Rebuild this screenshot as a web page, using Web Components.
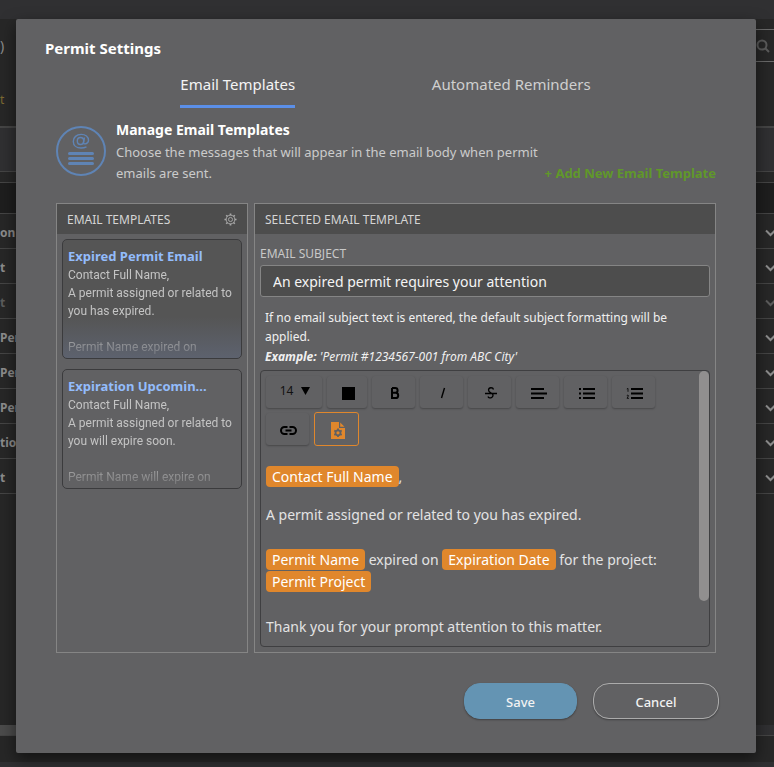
<!DOCTYPE html>
<html lang="en">
<head>
<meta charset="utf-8">
<title>Permit Settings</title>
<style>
html,body{height:100%;margin:0}
body{background:#272727;overflow:hidden;color:#f2f2f2;font-family:"Noto Sans","Open Sans",sans-serif;font-size:14px}
</style>
</head>
<body>
<permit-app></permit-app>
<script>
function define(name, html, setup) {
  const template = document.createElement('template');
  template.innerHTML = '<style>*{box-sizing:border-box}button,input{font:inherit;color:inherit}</style>' + html;
  customElements.define(name, class extends HTMLElement {
    constructor() {
      super();
      this.attachShadow({ mode: 'open' }).append(template.content.cloneNode(true));
    }
    connectedCallback() { if (setup) setup(this, this.shadowRoot); }
  });
}

define('permit-row', `
<style>
:host{display:flex;align-items:center;justify-content:space-between;height:35px;padding-top:3px;border-top:1px solid #454545;color:#8c8c8c;font-weight:700;font-size:12px;line-height:18px;overflow:hidden;box-sizing:border-box}
:host([muted]){color:#5c5c5c}
svg{display:block;margin-right:-2px}
</style>
<span><slot></slot></span>
<svg width="11" height="8" viewBox="0 0 11 8" fill="none" stroke="currentColor" stroke-width="2"><path d="M1 1.5 5.5 6 10 1.5"/></svg>`);

define('permit-list', `
<style>
:host{display:flex;flex-direction:column;height:100%;background:#272727}
.top{height:19px;background:#303032}
.search{display:flex;justify-content:space-between;align-items:flex-start;height:64px;padding-top:10px;font-size:14px;color:#8c8c8c}
.search span{line-height:33px}
.box{display:flex;align-items:center;justify-content:flex-end;width:60px;height:33px;padding-right:4px;border:1px solid #6a6a6a;border-right:0;color:#5c5c5c}
.tab{height:45px;line-height:34px;font-size:12px;color:#7d6a31;border-bottom:2px solid #454545}
.band{height:44px;background:#303032;border-bottom:1px solid #454545}
.gap{height:11px;border-bottom:1px solid #454545}
.head{height:30px;background:#1e1e1e}
.end{border-top:1px solid #454545}
.rest{flex:1}
.bar{height:11px;display:flex;background:#303032;border-bottom:1px solid #454545}
.bar i{width:50%;background:#4b4b4b}
.foot{height:31px;background:#272727;border-bottom:5px solid #303032}
</style>
<div class="top"></div>
<div class="search"><span>)</span><div class="box"><svg width="14" height="14" viewBox="0 0 14 14" fill="none" stroke="currentColor" stroke-width="2"><circle cx="6" cy="6" r="4.5"/><path d="m9 9 4 4"/></svg></div></div>
<div class="tab">t</div>
<div class="band"></div><div class="gap"></div><div class="head"></div>
<permit-row>on</permit-row><permit-row>t</permit-row><permit-row muted>t</permit-row>
<permit-row>Per</permit-row><permit-row>Per</permit-row><permit-row>Per</permit-row>
<permit-row>tion</permit-row><permit-row>t</permit-row>
<div class="end"></div>
<div class="rest"></div>
<div class="bar"><i></i></div><div class="foot"></div>`);

define('tab-bar', `
<style>
:host{display:grid;grid-template-columns:1fr 1fr;justify-items:center;padding:0 108px 0 85px}
button{height:36px;padding:0 0 10px;border:0;border-bottom:3px solid transparent;background:none;font-size:15px;line-height:22px;color:#cfcfcf;white-space:nowrap}
button[aria-selected=true]{border-color:#5b8fe8;color:#f4f4f4}
</style>
<button role="tab" aria-selected="true">Email Templates</button>
<button role="tab" aria-selected="false">Automated Reminders</button>`,
(el) => el.setAttribute('role', 'tablist'));

define('template-intro', `
<style>
:host{display:flex;gap:10px;padding:12px 40px 0}
.icon{flex:none;display:block;margin-top:6px}
.text{flex:1}
h3{margin:0;font-size:14px;line-height:20px;color:#fff}
p{margin:2px 0 0;font-size:13px;line-height:21px;color:#cbcbcb}
.add{align-self:flex-end;font-weight:700;font-size:13px;line-height:22px;color:#60982a;text-decoration:none;white-space:nowrap;margin-left:-10px}
</style>
<svg class="icon" width="50" height="50" viewBox="0 0 50 50" fill="none" stroke="#5f84b5">
<circle cx="25" cy="25" r="24" stroke-width="2"/>
<g stroke-width="1.4"><ellipse cx="24.5" cy="15" rx="3.2" ry="3.5"/><path d="M28.5 11.5 27.4 16.5C27.2 19 32.5 18 32.5 14.3 32.5 10.8 29.5 8.4 25.2 8.4 20.6 8.4 17.3 11.3 17.3 15.4 17.3 19.6 20.6 22 25 22Q28 22 30.5 20.8"/></g>
<g stroke-width="3" stroke-linecap="round"><path d="M13.5 27.5h23M13.5 32.5h23M13.5 37.5h23"/></g></svg>
<div class="text"><h3>Manage Email Templates</h3><p>Choose the messages that will appear in the email body when permit emails are sent.</p></div>
<a class="add" href="#new">+ Add New Email Template</a>`);

define('titled-panel', `
<style>
:host{display:flex;flex-direction:column;min-width:0;min-height:0;border:1px solid #858585}
header{display:flex;align-items:center;justify-content:space-between;height:30px;padding:1px 10px 0;background:#4d4d4d;color:#d5d5d5;font-size:12px;white-space:nowrap}
h4{margin:0;font-weight:400;line-height:20px}
.body{flex:1;min-height:0;display:flex;flex-direction:column;padding:5px}
</style>
<header><h4></h4><slot name="action"></slot></header><div class="body"><slot></slot></div>`,
(el, root) => { root.querySelector('h4').textContent = el.getAttribute('heading'); });

define('template-card', `
<style>
:host{display:block;box-sizing:border-box;height:120px;margin-bottom:10px;padding:6px 0 6px 5px;border:1px solid #3b3b3d;border-radius:5px;overflow:hidden;color:#c4c4c4}
:host([selected]){background:linear-gradient(#555 65%,#5d626e)}
h5{margin:0;font-size:13px;line-height:20px;color:#93bcfb;white-space:nowrap}
.body{font-family:Roboto,"Noto Sans",sans-serif;font-size:12px;line-height:18px;white-space:pre-line;-webkit-mask:linear-gradient(#000 60px,transparent 98px);mask:linear-gradient(#000 60px,transparent 98px)}
</style>
<h5></h5><div class="body"><slot></slot></div>`,
(el, root) => { root.querySelector('h5').textContent = el.getAttribute('heading'); });

define('tool-button', `
<style>
:host{display:block}
button{display:flex;align-items:center;justify-content:center;gap:8px;width:43px;height:32px;padding:2px 0 0 2px;border:0;border-radius:3px;background:#616163;box-shadow:0 1px 2px #00000047;color:#111}
:host([wide]) button{width:56px;padding:0 0 3px 2px;font-size:12px}
:host([square]) button{width:40px}
:host([active]) button{width:45px;height:34px;border:1px solid #e0872c;box-shadow:none;color:#e0872c}
</style>
<button type="button"><slot></slot></button>`,
(el, root) => root.querySelector('button').setAttribute('aria-label', el.getAttribute('label')));

define('merge-field', `
<style>
:host{display:inline-block;height:21px;padding:0 6px;border-radius:4px;background:#e0872c;color:#fff;line-height:21px;vertical-align:top}
</style><slot></slot>`);

define('message-editor', `
<style>
:host{display:flex;flex:1;min-height:0;border:1px solid #3f3f41;border-radius:4px;overflow:hidden}
.main{flex:1;min-width:0;padding:5px}
.tools{display:flex;flex-wrap:wrap;gap:4px 5px;max-width:400px;min-height:70px;align-items:center}
.doc{margin-top:20px;font-size:14px;line-height:22px;color:#e3e3e3;outline:0}
p{margin:0 0 23px}
p:first-child{margin-bottom:16px}
p:last-child{margin-bottom:0}
.thumb{width:10px;height:230px;border-radius:5px;background:#918f8f}
svg{display:block}
</style>
<div class="main">
<div class="tools">
<tool-button wide label="Font size">14 <svg width="9" height="8" viewBox="0 0 9 8"><path fill="#000" d="M0 0h9L4.500 8z"/></svg></tool-button>
<tool-button square label="Text colour"><svg width="13" height="13"><path d="M0 0h13v13H0z"/></svg></tool-button>
<tool-button label="Bold"><svg width="10" height="12" viewBox="0 0 10 12" fill="none" stroke="#000" stroke-width="2"><path d="M2 1v10h3.600a2.500 2.500 0 0 0 0-5.200H2M2 1h3.200a2.300 2.300 0 0 1 0 4.800"/></svg></tool-button>
<tool-button label="Italic"><svg width="8" height="12" viewBox="0 0 8 12" fill="none" stroke="#000" stroke-width="1.400"><path d="M5.500 1 2.500 11"/></svg></tool-button>
<tool-button label="Strikethrough"><svg width="14" height="14" viewBox="0 0 14 14" fill="none" stroke="#000" stroke-width="1.300"><path d="M9.500 3.500C9 1.200 4.700 1 4.500 4 4.500 6 6.500 6.600 8 7.500 11.500 10.500 5 14 4 10.500M1 7.500h12"/></svg></tool-button>
<tool-button label="Align left"><svg width="17" height="11" viewBox="0 0 17 11" stroke="#000" stroke-width="2"><path d="M1 1h13M1 5.500h16M1 10h13"/></svg></tool-button>
<tool-button label="Bulleted list"><svg width="17" height="11" viewBox="0 0 17 11" stroke="#000" stroke-width="2"><path d="M5 1h12M5 5.500h12M5 10h12M1 1h2M1 5.500h2M1 10h2"/></svg></tool-button>
<tool-button label="Numbered list"><svg width="17" height="11" viewBox="0 0 17 11" fill="none" stroke="#000" stroke-width="2"><path d="M5 1h12M5 5.500h12M5 10h12"/><path stroke-width=".8" d="M.8 1 2 .4v3.400M.8 7.500q1.500-1 1.700.2L1 10.300h2"/></svg></tool-button>
<tool-button label="Link"><svg width="17" height="9" viewBox="0 0 17 9" fill="none" stroke="#000" stroke-width="2"><path d="M7.500 1H4.500a3.500 3.500 0 0 0 0 7H7.500M9.500 1h3a3.500 3.500 0 0 1 0 7h-3M5.500 4.500h6"/></svg></tool-button>
<tool-button active label="Insert field"><svg width="14" height="17" viewBox="0 0 14 17" fill="currentColor"><path d="M0 0h8v6h6v11H0zM9.200.5l4.300 4.300H9.200z"/><g fill="none" stroke="#616163"><circle cx="7" cy="10.800" r="2.500" stroke-width="1.800"/><path stroke-width="1.800" d="M7 6.500v1.800M7 13.300v1.800M3.300 8.600l1.500.9M9.200 12.100l1.500.9M3.300 13l1.500-.9M9.200 9.500l1.500-.9"/></g></svg></tool-button>
</div>
<div class="doc" contenteditable="true" role="textbox" aria-label="Email body" spellcheck="false"><p><merge-field>Contact Full Name</merge-field>,</p><p>A permit assigned or related to you has expired.</p><p><merge-field>Permit Name</merge-field> expired on <merge-field>Expiration Date</merge-field> for the project: <merge-field>Permit Project</merge-field></p><p>Thank you for your prompt attention to this matter.</p></div>
</div><div class="thumb"></div>`);

define('subject-field', `
<style>
:host{display:block}
label{display:block;padding-top:5px;font-size:12px;line-height:20px;color:#c8c8c8}
input{display:block;width:100%;height:32px;margin-top:1px;padding:0 12px;border:1px solid #858585;border-radius:3px;background:#4d4d4d;color:#f4f4f4;font-size:14px}
p{margin:11px 5px 3px;font-size:12px;line-height:19px;color:#f0f0f0}
em{display:block;line-height:21px}
</style>
<label for="subject">EMAIL SUBJECT</label>
<input id="subject" value="An expired permit requires your attention">
<p>If no email subject text is entered, the default subject formatting will be applied.<em><b>Example:</b> 'Permit #1234567-001 from ABC City'</em></p>`);

define('pill-button', `
<style>
button{width:126px;height:36px;padding:1px 0 0;border:1px solid #ababab;border-radius:16px;background:none;box-shadow:0 1px 2px #0005;font-size:13px;font-weight:500;color:#f2f2f2}
:host([primary]) button{width:113px;border-color:#6494b3;background:#6494b3}
:host{display:block}
</style><button type="button"><slot></slot></button>`);

define('settings-dialog', `
<style>
:host{position:absolute;inset:19px 18px 14px 16px;display:flex;flex-direction:column;border-radius:2px;background:#616163;box-shadow:0 6px 16px #0008}
h2{margin:0;padding:18px 29px 0;font-size:15px;line-height:22px;color:#fff}
tab-bar{margin-top:13px}
.panels{flex:1;min-height:0;display:grid;grid-template:minmax(0,1fr)/192px minmax(0,1fr);gap:6px;padding:19px 40px 0}
footer{display:flex;justify-content:flex-end;gap:16px;padding:30px 37px 34px}
.gear{display:block;padding:0;border:0;background:none;color:#a8a8a8}
svg{display:block}
</style>
<h2>Permit Settings</h2>
<tab-bar></tab-bar>
<template-intro></template-intro>
<div class="panels">
<titled-panel heading="EMAIL TEMPLATES">
<button class="gear" slot="action" aria-label="Template options"><svg width="13" height="13" viewBox="0 0 14 14" fill="none" stroke="currentColor"><circle cx="7" cy="7" r="2.200"/><circle cx="7" cy="7" r="4.700"/><path stroke-width="1.800" d="M7 .5v2M7 11.500v2M.5 7h2M11.500 7h2M2.400 2.400l1.400 1.400M10.200 10.200l1.400 1.400M2.400 11.600l1.400-1.400M10.200 3.800l1.400-1.400"/></svg></button>
<template-card selected heading="Expired Permit Email">Contact Full Name,
A permit assigned or related to you has expired.

Permit Name expired on</template-card>
<template-card heading="Expiration Upcomin...">Contact Full Name,
A permit assigned or related to you will expire soon.

Permit Name will expire on</template-card>
</titled-panel>
<titled-panel heading="SELECTED EMAIL TEMPLATE"><subject-field></subject-field><message-editor></message-editor></titled-panel>
</div>
<footer><pill-button primary>Save</pill-button><pill-button>Cancel</pill-button></footer>`,
(el) => { el.setAttribute('role', 'dialog'); el.setAttribute('aria-label', 'Permit Settings'); });

define('permit-app', `
<style>:host{display:block;position:relative;height:100vh;overflow:hidden}</style>
<permit-list></permit-list><settings-dialog></settings-dialog>`);
</script>
</body>
</html>
